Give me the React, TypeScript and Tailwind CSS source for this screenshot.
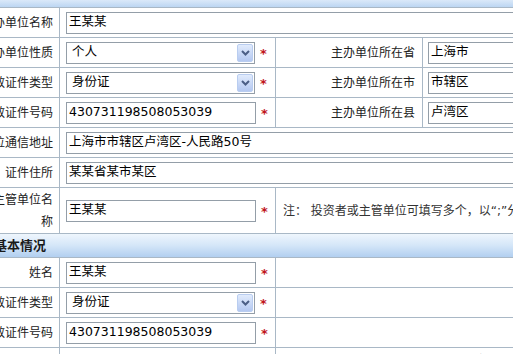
import type { ReactNode } from 'react';

const grid = 'border-[#a9b8c6]';

function Label({ children, wrap }: { children: ReactNode; wrap?: boolean }) {
    return (
        <div
            className={`w-[60px] shrink-0 border-r ${grid} flex items-center justify-end pr-[6px] overflow-hidden whitespace-nowrap text-[12px] text-[#222] ${wrap ? 'leading-[22px] text-right' : ''}`}
        >
            <span className="block">{children}</span>
        </div>
    );
}

function TextBox({ value, width }: { value: string; width: string }) {
    return (
        <div
            className={`${width} h-[22px] shrink-0 border border-[#949ea8] bg-white flex items-center pl-[2px] text-[12.5px] text-black whitespace-nowrap overflow-hidden`}
        >
            {value}
        </div>
    );
}

function SelectBox({ value }: { value: string }) {
    return (
        <div className="w-[189px] h-[22px] shrink-0 border border-[#949ea8] bg-white flex items-center justify-between pl-[5px] pr-px text-[12.5px] text-black">
            <span>{value}</span>
            <span className="w-[16px] h-[18px] border border-[#b9cdf0] rounded-[2px] bg-gradient-to-b from-[#e1ebfc] to-[#b4c8f1] flex items-center justify-center">
                <svg width="9" height="6" viewBox="0 0 9 6">
                    <path d="M1 1 L4.5 4.5 L8 1" fill="none" stroke="#4b5e86" strokeWidth="2" />
                </svg>
            </span>
        </div>
    );
}

function Star() {
    return <span className="ml-[5px] text-[#c0141a] text-[13px] font-bold leading-none mt-[2px]">*</span>;
}

function Row({ children, h = 'h-[30px]' }: { children: ReactNode; h?: string }) {
    return <div className={`flex ${h} border-b ${grid}`}>{children}</div>;
}

function MidCell({ children }: { children?: ReactNode }) {
    return <div className={`w-[216px] shrink-0 border-r ${grid} flex items-center pl-[6px]`}>{children}</div>;
}

function RightLabel({ children }: { children: ReactNode }) {
    return (
        <div className={`w-[147px] shrink-0 border-r ${grid} flex items-center justify-end pr-[7px] text-[12px] text-[#222] whitespace-nowrap`}>
            {children}
        </div>
    );
}

function WideCell({ value }: { value: string }) {
    return (
        <div className="flex-1 flex items-center pl-[6px]">
            <TextBox value={value} width="w-[520px]" />
        </div>
    );
}

export default function App() {
    return (
        <div
            className="w-[513px] h-[354px] overflow-hidden bg-white"
            style={{ fontFamily: '"DejaVu Sans", "Noto Sans CJK SC", sans-serif' }}
        >
            <div className="w-[720px]">
                <div className={`h-[8px] border-b ${grid} bg-gradient-to-b from-[#dbe9f9] to-[#bcd6f2]`} />

                <Row>
                    <Label>主办单位名称</Label>
                    <WideCell value="王某某" />
                </Row>
                <Row>
                    <Label>主办单位性质</Label>
                    <MidCell>
                        <SelectBox value="个人" />
                        <Star />
                    </MidCell>
                    <RightLabel>主办单位所在省</RightLabel>
                    <div className="flex-1 flex items-center pl-[5px]">
                        <TextBox value="上海市" width="w-[180px]" />
                    </div>
                </Row>
                <Row>
                    <Label>有效证件类型</Label>
                    <MidCell>
                        <SelectBox value="身份证" />
                        <Star />
                    </MidCell>
                    <RightLabel>主办单位所在市</RightLabel>
                    <div className="flex-1 flex items-center pl-[5px]">
                        <TextBox value="市辖区" width="w-[180px]" />
                    </div>
                </Row>
                <Row>
                    <Label>有效证件号码</Label>
                    <MidCell>
                        <TextBox value="430731198508053039" width="w-[190px]" />
                        <Star />
                    </MidCell>
                    <RightLabel>主办单位所在县</RightLabel>
                    <div className="flex-1 flex items-center pl-[5px]">
                        <TextBox value="卢湾区" width="w-[180px]" />
                    </div>
                </Row>
                <Row>
                    <Label>主办单位通信地址</Label>
                    <WideCell value="上海市市辖区卢湾区-人民路50号" />
                </Row>
                <Row>
                    <Label>证件住所</Label>
                    <WideCell value="某某省某市某区" />
                </Row>
                <Row h="h-[46px]">
                    <Label wrap>
                        主管单位名
                        <br />称
                    </Label>
                    <MidCell>
                        <TextBox value="王某某" width="w-[190px]" />
                        <Star />
                    </MidCell>
                    <div className="flex-1 flex items-center pl-[7px] text-[12px] text-[#333] whitespace-nowrap">
                        注：&nbsp;投资者或主管单位可填写多个，以“;”分隔
                    </div>
                </Row>

                <div
                    className={`h-[24px] border-b ${grid} bg-gradient-to-b from-[#eff6fd] via-[#d4e6f8] to-[#b2cff0] flex items-center -ml-[6px] text-[13px] font-bold text-[#1a1a1a]`}
                >
                    基本情况
                </div>

                <Row>
                    <Label>姓名</Label>
                    <MidCell>
                        <TextBox value="王某某" width="w-[190px]" />
                        <Star />
                    </MidCell>
                    <div className="flex-1" />
                </Row>
                <Row>
                    <Label>有效证件类型</Label>
                    <MidCell>
                        <SelectBox value="身份证" />
                        <Star />
                    </MidCell>
                    <div className="flex-1" />
                </Row>
                <Row>
                    <Label>有效证件号码</Label>
                    <MidCell>
                        <TextBox value="430731198508053039" width="w-[190px]" />
                        <Star />
                    </MidCell>
                    <div className="flex-1" />
                </Row>
                <Row>
                    <Label>&nbsp;</Label>
                    <MidCell />
                    <div className="flex-1 pl-[7px] pt-[4px] text-[12px] text-[#333] whitespace-nowrap">
                        注：联系方式请填写主体负责人的真实联系方式
                    </div>
                </Row>
            </div>
        </div>
    );
}
